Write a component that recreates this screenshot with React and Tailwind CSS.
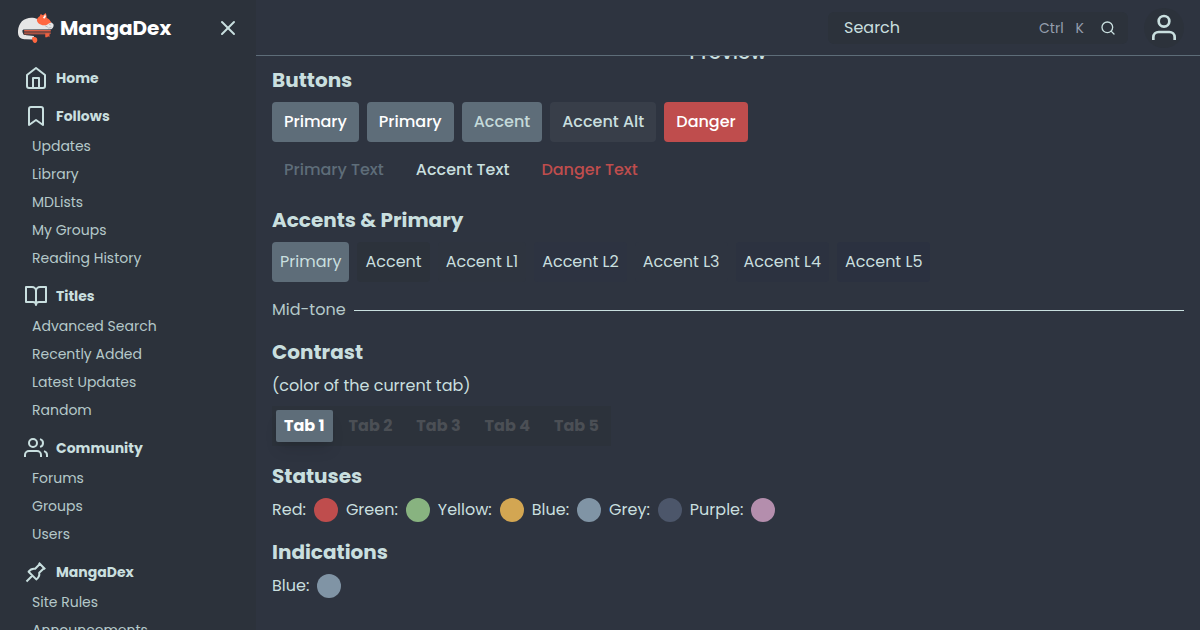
import React from "react";
import { FiSearch, FiX } from "react-icons/fi";

const menu = [
  { title: "Home", icon: "home", items: [] },
  {
    title: "Follows",
    icon: "bookmark",
    items: ["Updates", "Library", "MDLists", "My Groups", "Reading History"],
  },
  {
    title: "Titles",
    icon: "book",
    items: ["Advanced Search", "Recently Added", "Latest Updates", "Random"],
  },
  { title: "Community", icon: "users", items: ["Forums", "Groups", "Users"] },
  { title: "MangaDex", icon: "pin", items: ["Site Rules", "Announcements"] },
];

const buttons = [
  { label: "Primary", style: "bg-[#5e6d79] text-white" },
  { label: "Primary", style: "bg-[#5e6d79] text-white" },
  { label: "Accent", style: "bg-[#5e6d79] text-[#c4dada]" },
  { label: "Accent Alt", style: "bg-[#383e49] text-[#c9dfdf]" },
  { label: "Danger", style: "bg-[#bf4d4d] text-white" },
];

const textButtons = [
  { label: "Primary Text", style: "text-[#5e6d79]" },
  { label: "Accent Text", style: "text-[#c9dfdf]" },
  { label: "Danger Text", style: "text-[#bf4d4d]" },
];

const accents = [
  { label: "Primary", style: "bg-[#5e6d79]" },
  { label: "Accent", style: "bg-[#2c323b]" },
  { label: "Accent L1", style: "bg-[#2e343f]" },
  { label: "Accent L2", style: "bg-[#2d3341]" },
  { label: "Accent L3", style: "bg-[#2e3440]" },
  { label: "Accent L4", style: "bg-[#2c3240]" },
  { label: "Accent L5", style: "bg-[#2b3140]" },
];

const tabs = ["Tab 1", "Tab 2", "Tab 3", "Tab 4", "Tab 5"];

const statuses = [
  { label: "Red", style: "bg-[#bf4d4d]" },
  { label: "Green", style: "bg-[#88b380]" },
  { label: "Yellow", style: "bg-[#d3a652]" },
  { label: "Blue", style: "bg-[#8094a5]" },
  { label: "Grey", style: "bg-[#4c566a]" },
  { label: "Purple", style: "bg-[#b48ead]" },
];

const iconShapes = {
  home: (
    <>
      <path d="m3 9 9-7 9 7v11a2 2 0 0 1-2 2H5a2 2 0 0 1-2-2z" />
      <path d="M9 22V12h6v10" />
    </>
  ),
  bookmark: <path d="m19 21-7-5-7 5V5a2 2 0 0 1 2-2h10a2 2 0 0 1 2 2z" />,
  book: (
    <path d="M2 3h6a4 4 0 0 1 4 4v14a3 3 0 0 0-3-3H2zM22 3h-6a4 4 0 0 0-4 4v14a3 3 0 0 1 3-3h7z" />
  ),
  users: (
    <>
      <path d="M17 21v-2a4 4 0 0 0-4-4H5a4 4 0 0 0-4 4v2" />
      <circle cx="9" cy="7" r="4" />
      <path d="M23 21v-2a4 4 0 0 0-3-3.87M16 3.13a4 4 0 0 1 0 7.75" />
    </>
  ),
  pin: (
    <path d="M14.8 2.8l6.4 6.4M8 16l-5.5 5.5M15.8 4l-4.6 4.8c-2.6-.5-4.8.4-6.6 2.9l7.7 7.7c2.5-1.8 3.4-4 2.9-6.6L20 8.2" />
  ),
  user: (
    <>
      <path d="M20 21v-2a4 4 0 0 0-4-4H8a4 4 0 0 0-4 4v2" />
      <circle cx="12" cy="7" r="4" />
    </>
  ),
};

const Icon = ({ name, className }) => (
  <svg
    viewBox="0 0 24 24"
    fill="none"
    stroke="currentColor"
    strokeWidth="2"
    strokeLinejoin="round"
    className={className}
    aria-hidden="true"
  >
    {iconShapes[name]}
  </svg>
);

const CatLogo = () => (
  <svg viewBox="54 36 111 93" className="h-8 w-9" aria-hidden="true">
    <path
      d="M114 55C98 47 79 50 66 62C55 74 52 92 55 104C58 114 66 117 78 117L98 118L104 107L80 105C70 103 67 98 68 89L152 88C160 86 166 79 163 70L150 60Z"
      fill="#e6e6e6"
    />
    <path
      d="M112 57C114 51 118 47 121 46L124 39L131 43L139 36C142 41 143 47 142 51C150 54 154 60 156 66C150 66 148 70 142 73C127 77 113 69 112 57Z"
      fill="#ff6740"
    />
    <path d="M131 51L138 40L140 48L135 54Z" fill="#fff" />
    <path d="M138 76l8 4M150 71l5 2M147 83l10-2" stroke="#9a9da3" strokeWidth="2" />
    <path d="M70 87H156V104H72Q66 96 70 87Z" fill="#2c323b" />
    <path d="M73 91H155M73 98H155" stroke="#dd6149" strokeWidth="4" />
    <path d="M72 102H152" stroke="#8c4a44" strokeWidth="2" />
    <path d="M138 99H151V111L147 108L144 111H138Z" fill="#f0603f" />
    <path
      d="M97 112C103 109 111 110 113 116C115 122 112 129 107 129C101 129 99 123 98 119Z"
      fill="#ff6740"
    />
  </svg>
);

const Sidebar = () => (
  <aside className="flex h-screen w-64 shrink-0 flex-col overflow-hidden bg-[#2c323b]">
    <div className="flex h-14 shrink-0 items-center justify-between pr-4 pl-[18px]">
      <a href="#home" className="flex items-center gap-1.5">
        <CatLogo />
        <span className="text-xl font-bold text-white">MangaDex</span>
      </a>
      <button type="button" aria-label="Close menu">
        <FiX size={24} />
      </button>
    </div>
    <nav className="flex flex-col gap-2.5 pt-2">
      {menu.map((group) => (
        <div key={group.title}>
          <a href="#group" className="flex h-7 items-center gap-2 px-6 text-sm font-bold">
            <Icon name={group.icon} className="size-6" />
            {group.title}
          </a>
          {group.items.length > 0 && (
            <ul className="mt-0.5">
              {group.items.map((item) => (
                <li key={item}>
                  <a href="#item" className="block pl-8 text-sm leading-7 text-[#b5c9ca]">
                    {item}
                  </a>
                </li>
              ))}
            </ul>
          )}
        </div>
      ))}
    </nav>
  </aside>
);

const Header = () => (
  <header className="relative z-10 flex h-14 shrink-0 items-center justify-end gap-4 border-b border-[#5e6d79] bg-[#2e3440] px-4">
    <label className="flex h-8 w-75 items-center rounded-md bg-[#2c323b] pr-3 pl-4">
      <input
        type="text"
        aria-label="Search"
        placeholder="Search"
        className="min-w-0 flex-1 bg-transparent outline-none placeholder:text-[#c9dfdf]"
      />
      <span className="flex gap-3 text-sm text-[#959fae]">
        <kbd className="font-[inherit]">Ctrl</kbd>
        <kbd className="font-[inherit]">K</kbd>
      </span>
      <FiSearch size={16} className="ml-4" />
    </label>
    <button
      type="button"
      aria-label="Account"
      className="flex size-10 items-center justify-center rounded-full bg-[#2c323b]"
    >
      <Icon name="user" className="size-8" />
    </button>
  </header>
);

const Section = ({ title, children }) => (
  <section className="mb-4">
    <h2 className="mb-2 text-xl font-bold">{title}</h2>
    {children}
  </section>
);

const Status = ({ label, style }) => (
  <div className="flex items-center gap-2">
    {label}:
    <span className={`size-6 rounded-full ${style}`} />
  </div>
);

const App = () => {
  return (
    <div className="flex h-screen overflow-hidden bg-[#2e3440] font-[Poppins,Inter,sans-serif] text-base text-[#c9dfdf]">
      <Sidebar />
      <div className="flex min-w-0 flex-1 flex-col">
        <Header />
        {/* content is scrolled a little under the header */}
        <main className="-mt-[18px] px-4">
          <h1 className="text-center text-xl font-medium">Preview</h1>

          <Section title="Buttons">
            <div className="flex gap-2">
              {buttons.map((button, index) => (
                <button
                  key={index}
                  type="button"
                  className={`h-10 rounded px-3 font-medium ${button.style}`}
                >
                  {button.label}
                </button>
              ))}
            </div>
            <div className="mt-2 flex gap-2">
              {textButtons.map((button) => (
                <button
                  key={button.label}
                  type="button"
                  className={`h-10 rounded px-3 font-medium ${button.style}`}
                >
                  {button.label}
                </button>
              ))}
            </div>
          </Section>

          <Section title="Accents & Primary">
            <div className="flex gap-2">
              {accents.map((accent) => (
                <div
                  key={accent.label}
                  className={`flex h-10 items-center rounded px-2 ${accent.style}`}
                >
                  {accent.label}
                </div>
              ))}
            </div>
            <div className="mt-4 flex items-center gap-2 text-[#b5c9ca]">
              Mid-tone
              <hr className="flex-1 border-[#c9dfdf]" />
            </div>
          </Section>

          <Section title="Contrast">
            <p>(color of the current tab)</p>
            <div role="tablist" className="mt-2 flex w-fit gap-2 bg-[#2c323b] p-1">
              {tabs.map((tab, index) => (
                <button
                  key={tab}
                  type="button"
                  role="tab"
                  aria-selected={index === 0}
                  className={`h-8 px-2 font-bold ${
                    index === 0
                      ? "rounded-xs bg-[#5e6d79] text-white shadow-lg"
                      : "text-[#4b4f55]"
                  }`}
                >
                  {tab}
                </button>
              ))}
            </div>
          </Section>

          <Section title="Statuses">
            <div className="flex gap-2">
              {statuses.map((status) => (
                <Status key={status.label} {...status} />
              ))}
            </div>
          </Section>

          <Section title="Indications">
            <Status label="Blue" style="bg-[#8094a5]" />
          </Section>
        </main>
      </div>
    </div>
  );
};

export default App;
